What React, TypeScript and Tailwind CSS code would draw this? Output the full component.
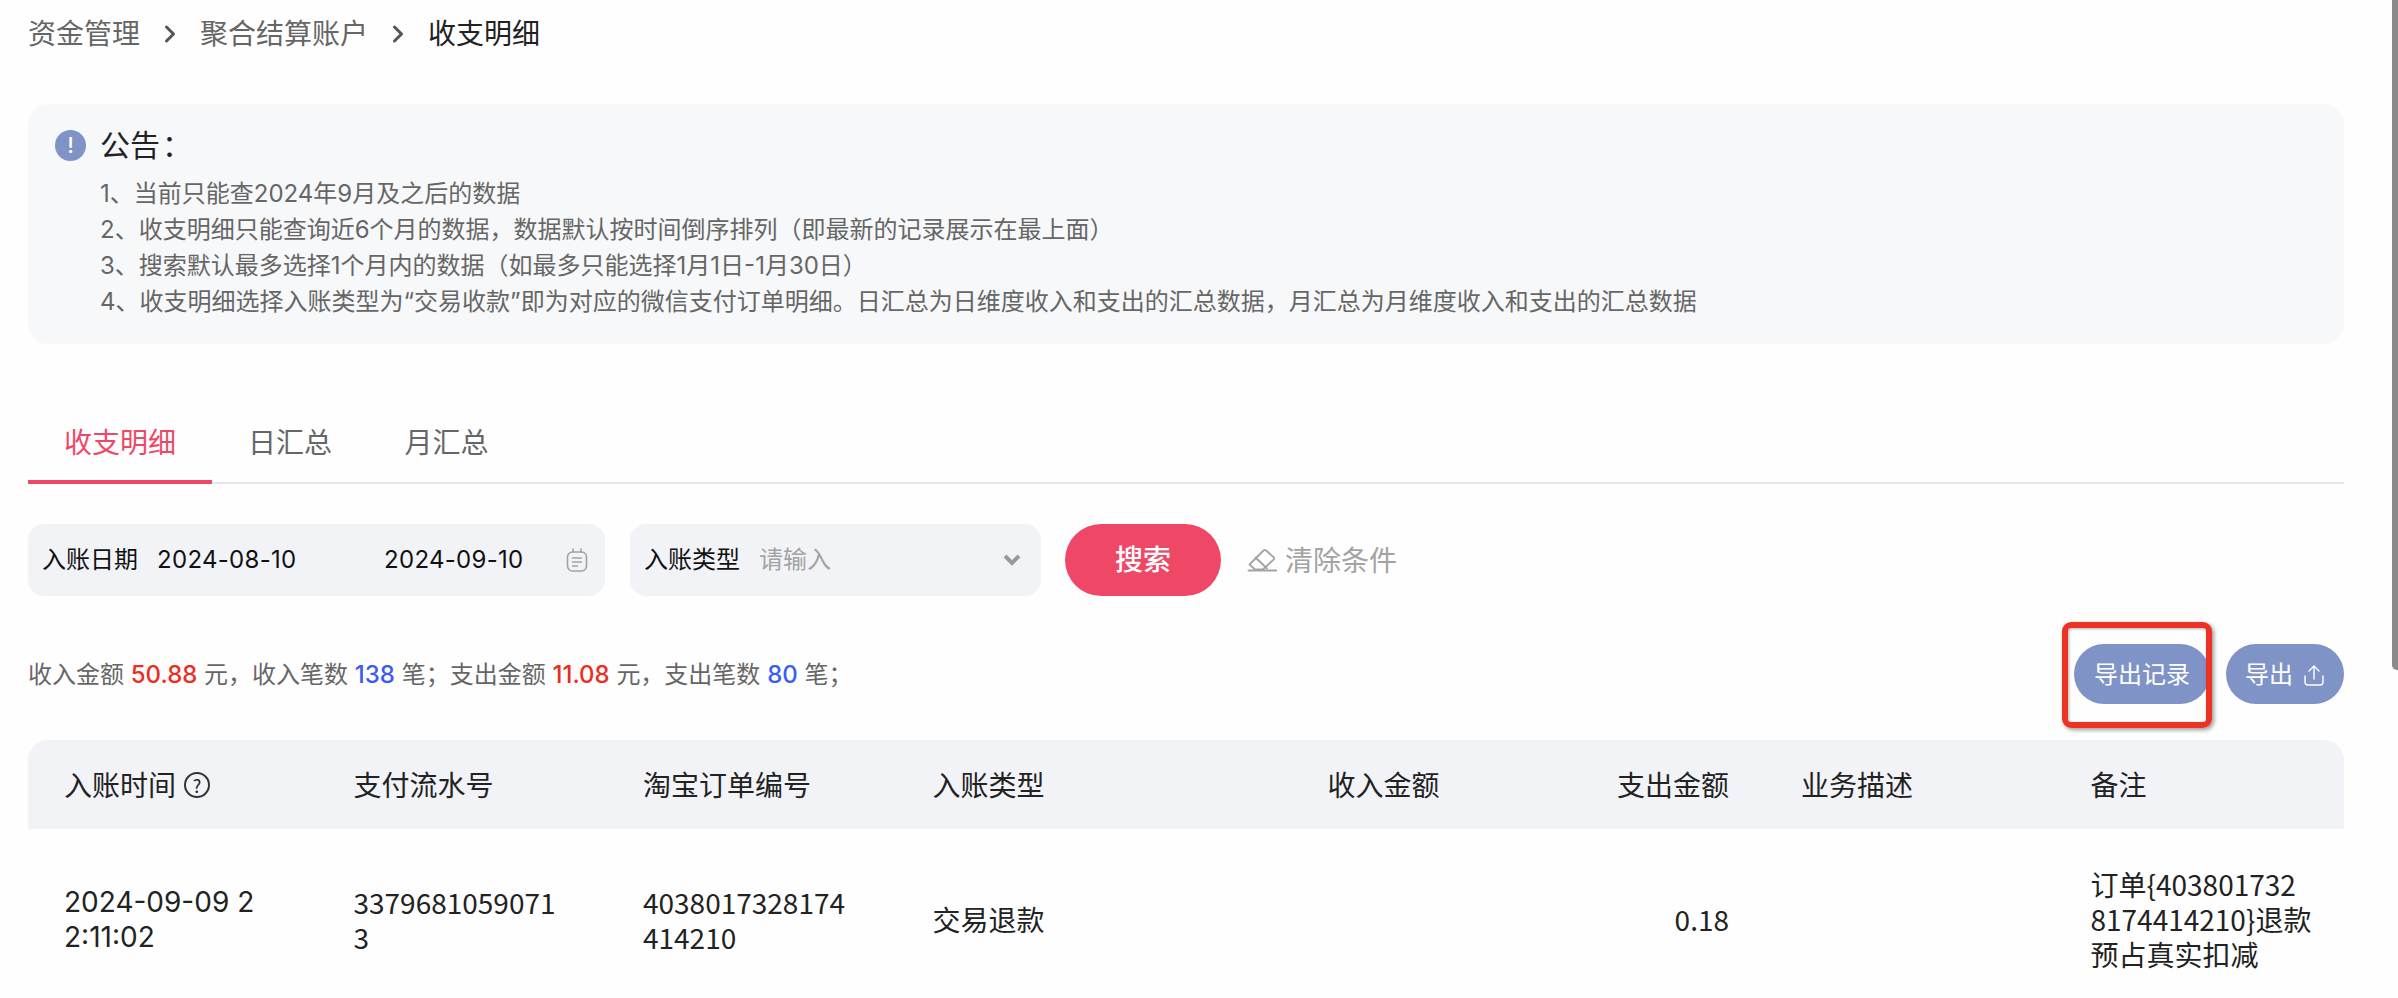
import { ChevronRight } from "lucide-react";

const notices = [
  "1、当前只能查2024年9月及之后的数据",
  "2、收支明细只能查询近6个月的数据，数据默认按时间倒序排列（即最新的记录展示在最上面）",
  "3、搜索默认最多选择1个月内的数据（如最多只能选择1月1日-1月30日）",
  "4、收支明细选择入账类型为“交易收款”即为对应的微信支付订单明细。日汇总为日维度收入和支出的汇总数据，月汇总为月维度收入和支出的汇总数据",
];

function CalendarIcon() {
  return (
    <svg width="22" height="24" viewBox="0 0 22 24" fill="none" stroke="#a3a3a3" strokeWidth="1.6" strokeLinecap="round">
      <rect x="1.5" y="4" width="19" height="19" rx="5" />
      <path d="M7 1v3M15 1v3M6.5 10h9M6.5 14h9M6.5 18h5" />
    </svg>
  );
}

function EraserIcon() {
  return (
    <svg width="30" height="24" viewBox="0 0 30 24" fill="none" stroke="#a3a3a3" strokeWidth="1.8" strokeLinejoin="round" strokeLinecap="round">
      <path d="M2.5 16.5 16.5 2.5q1.3-1.3 2.6 0l7.4 6.6q1.3 1.3 0 2.6L16 21.5H8z" />
      <path d="M8.5 9.5 20 20.5" />
      <path d="M1.5 22.5h28" />
    </svg>
  );
}

export default function App() {
  return (
    <div className="relative h-[998px] w-[2398px] overflow-hidden bg-[#fefefe] pl-[28px] pr-[54px] pt-[14px] font-['Inter','Noto_Sans_CJK_SC',sans-serif]">
      <div className="flex h-[40px] items-center text-[28px] leading-[40px] text-[#666]">
        <span>资金管理</span>
        <ChevronRight className="mx-[16px] h-[28px] w-[28px] text-[#555]" strokeWidth={2.6} />
        <span>聚合结算账户</span>
        <ChevronRight className="mx-[16px] h-[28px] w-[28px] text-[#555]" strokeWidth={2.6} />
        <span className="text-[#222]">收支明细</span>
      </div>

      <div className="mt-[50px] h-[240px] rounded-[20px] bg-[#f7f8fa] pl-[27px] pt-[21px]">
        <div className="flex h-[40px] items-center text-[30px] leading-[40px] text-[#222]">
          <span className="flex h-[31px] w-[31px] items-center justify-center rounded-full bg-[#8093c7] text-[22px] font-medium leading-none text-white">!</span>
          <span className="ml-[14px]">公告</span>
          <span className="ml-[2px]">：</span>
        </div>
        <div className="mt-[11px] pl-[45px] text-[24px] leading-[36px] text-[#666]">
          {notices.map((line) => (
            <div key={line}>{line}</div>
          ))}
        </div>
      </div>

      <div className="mt-[64px] flex gap-[3px] border-b-2 border-[#e5e6eb] text-[28px] leading-[40px]">
        <div className="-mb-[2px] h-[76px] w-[184px] border-b-4 border-[#ee4866] pt-[15px] text-center text-[#ee4866]">收支明细</div>
        <div className="-mb-[2px] h-[76px] w-[150px] pt-[15px] text-center text-[#666]">日汇总</div>
        <div className="-mb-[2px] h-[76px] w-[157px] pt-[15px] text-center text-[#666]">月汇总</div>
      </div>

      <div className="mt-[40px] flex h-[72px] items-center">
        <div className="flex h-full w-[577px] items-center rounded-[16px] bg-[#f2f3f7] pl-[14px] pr-[17px] text-[24px] text-[#111]">
          <span className="w-[115px]">入账日期</span>
          <span className="w-[227px] tracking-[0.3px]">2024-08-10</span>
          <span className="tracking-[0.3px]">2024-09-10</span>
          <span className="ml-auto">
            <CalendarIcon />
          </span>
        </div>
        <div className="ml-[25px] flex h-full w-[411px] items-center rounded-[16px] bg-[#f2f3f7] pl-[14px] pr-[20px] text-[24px] text-[#111]">
          <span className="w-[115px]">入账类型</span>
          <span className="text-[#a3a3a3]">请输入</span>
          <svg className="ml-auto" width="18" height="12" viewBox="0 0 18 12" fill="none" stroke="#999" strokeWidth="4">
            <path d="M2 2l7 7 7-7" />
          </svg>
        </div>
        <button type="button" className="ml-[24px] h-full w-[156px] rounded-full bg-[#ee4866] text-[28px] font-medium text-white">
          搜索
        </button>
        <div className="ml-[26px] flex items-center gap-[8px] text-[28px] text-[#a3a3a3]">
          <EraserIcon />
          <span className="pt-[2px]">清除条件</span>
        </div>
      </div>

      <div className="mt-[48px] flex h-[60px] items-center justify-between">
        <div className="pt-[2px] text-[24px] text-[#666]">
          收入金额 <span className="font-medium text-[#ec2d1f]">50.88</span> 元，收入笔数 <span className="font-medium text-[#3b5bf5]">138</span> 笔；支出金额 <span className="font-medium text-[#ec2d1f]">11.08</span> 元，支出笔数 <span className="font-medium text-[#3b5bf5]">80</span> 笔；
        </div>
        <div className="flex gap-[16px] text-[24px] text-white">
          <button type="button" className="h-[60px] w-[136px] rounded-full bg-[#8093c7] pt-[2px]">
            导出记录
          </button>
          <button type="button" className="flex h-[60px] w-[118px] items-center justify-center gap-[10px] rounded-full bg-[#8093c7] pt-[2px]">
            导出
            <svg width="22" height="22" viewBox="0 0 22 22" fill="none" stroke="#fff" strokeWidth="1.4" strokeLinecap="round" strokeLinejoin="round">
              <path d="M11 15V2M6 7l5-5 5 5M2 12v6a3 3 0 0 0 3 3h12a3 3 0 0 0 3-3v-6" />
            </svg>
          </button>
        </div>
      </div>

      <table className="mt-[36px] w-full table-fixed border-collapse font-['Noto_Sans_CJK_SC',sans-serif] text-[28px] leading-[35px] text-[#222]">
        <thead>
          <tr className="h-[89px] font-normal">
            <th className="rounded-tl-[20px] bg-[#f2f3f7] px-[36px] text-left font-normal">
              <span className="inline-flex items-center gap-[8px]">
                入账时间
                <span className="flex h-[26px] w-[26px] items-center justify-center rounded-full border-2 border-[#333] text-[18px] leading-none">?</span>
              </span>
            </th>
            <th className="bg-[#f2f3f7] px-[36px] text-left font-normal">支付流水号</th>
            <th className="bg-[#f2f3f7] px-[36px] text-left font-normal">淘宝订单编号</th>
            <th className="bg-[#f2f3f7] px-[36px] text-left font-normal">入账类型</th>
            <th className="bg-[#f2f3f7] px-[36px] text-right font-normal">收入金额</th>
            <th className="bg-[#f2f3f7] px-[36px] text-right font-normal">支出金额</th>
            <th className="bg-[#f2f3f7] px-[36px] text-left font-normal">业务描述</th>
            <th className="rounded-tr-[20px] bg-[#f2f3f7] px-[36px] text-left font-normal">备注</th>
          </tr>
        </thead>
        <tbody>
          <tr>
            <td className="whitespace-nowrap px-[36px] py-[38px] font-['Inter',sans-serif]">
              2024-09-09 2
              <br />
              2:11:02
            </td>
            <td className="break-all px-[36px] py-[38px]">33796810590713</td>
            <td className="break-all px-[36px] py-[38px]">4038017328174414210</td>
            <td className="break-all px-[36px] py-[38px]">交易退款</td>
            <td className="px-[36px] py-[38px] text-right"></td>
            <td className="px-[36px] py-[38px] text-right">0.18</td>
            <td className="px-[36px] py-[38px]"></td>
            <td className="whitespace-nowrap px-[36px] py-[38px]">
              订单{"{"}403801732
              <br />
              8174414210{"}"}退款
              <br />
              预占真实扣减
            </td>
          </tr>
        </tbody>
      </table>

      {/* annotation box drawn over the export button */}
      <div className="absolute left-[2062px] top-[622px] h-[106px] w-[150px] rounded-[9px] border-[6px] border-[#ec3323] shadow-[2px_2px_4px_rgba(0,0,0,0.4),inset_1px_1px_3px_rgba(0,0,0,0.3)]" />
      {/* window scrollbar thumb */}
      <div className="absolute right-0 top-0 h-[670px] w-[6px] rounded-bl-[5px] bg-[#8a8a8a]" />
    </div>
  );
}
